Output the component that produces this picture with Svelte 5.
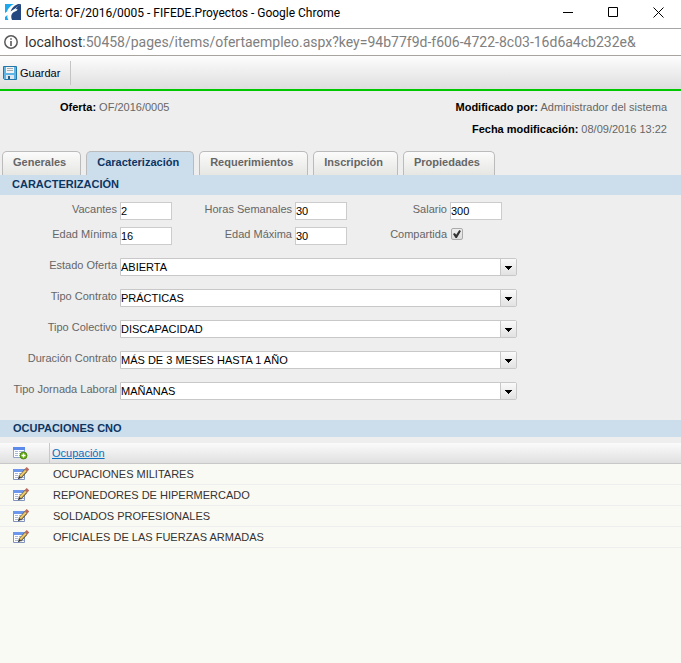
<script lang="ts">
	const url: string = '/pages/items/ofertaempleo.aspx?key=94b77f9d-f606-4722-8c03-16d6a4cb232e&';
	const tabs: string[] = ['Generales', 'Caracterización', 'Requerimientos', 'Inscripción', 'Propiedades'];
	const combos = [
		{ id: 'estado', label: 'Estado Oferta', value: 'ABIERTA' },
		{ id: 'contrato', label: 'Tipo Contrato', value: 'PRÁCTICAS' },
		{ id: 'colectivo', label: 'Tipo Colectivo', value: 'DISCAPACIDAD' },
		{ id: 'duracion', label: 'Duración Contrato', value: 'MÁS DE 3 MESES HASTA 1 AÑO' },
		{ id: 'jornada', label: 'Tipo Jornada Laboral', value: 'MAÑANAS' }
	];
	const ocupaciones: string[] = [
		'OCUPACIONES MILITARES',
		'REPONEDORES DE HIPERMERCADO',
		'SOLDADOS PROFESIONALES',
		'OFICIALES DE LAS FUERZAS ARMADAS'
	];

	let activeTab: string = 'Caracterización';
	let vacantes: string = '2';
	let horas: string = '30';
	let salario: string = '300';
	let edadMin: string = '16';
	let edadMax: string = '30';
	let compartida: boolean = true;
</script>

<div class="window">
	<header class="titlebar">
		<svg class="favicon" viewBox="0 0 16 16" width="16" height="16">
			<path fill="#1da7ee" d="M0 0h9C5 2 3 4.500 2 7.500L0 9z"/>
			<path fill="#1da7ee" d="M0 13l2.500-2C2 13 2.500 14.500 3.500 16H0z"/>
			<path fill="#24477f" d="M16 0v16H7C5.500 12 6.500 9.500 9 8l3-1.500L12.500 5l-2 .3C12 3 13.500 1.500 16 0z"/>
			<path fill="#24477f" d="M5.500 7.500C7 3.500 9.500 1.500 13 0h3l-5.500 4.300z"/>
		</svg>
		<span class="caption">Oferta: OF/2016/0005 - FIFEDE.Proyectos - Google Chrome</span>
		<button class="win-btn" aria-label="Minimizar">
			<svg viewBox="0 0 11 11" width="11" height="11"><path d="M0 5.500h10"/></svg>
		</button>
		<button class="win-btn" aria-label="Maximizar">
			<svg viewBox="0 0 11 11" width="11" height="11"><path d="M.5.5h9v9h-9z"/></svg>
		</button>
		<button class="win-btn" aria-label="Cerrar">
			<svg viewBox="0 0 11 11" width="11" height="11"><path d="M.5.5l10 10M10.500.5l-10 10"/></svg>
		</button>
	</header>

	<div class="address">
		<svg viewBox="0 0 14 14" width="14" height="14">
			<circle cx="7" cy="7" r="6.200" fill="none" stroke="#5a5a5a" stroke-width="1.500"/>
			<path fill="#5a5a5a" d="M6.200 3.200h1.600v1.600H6.200zM6.200 6h1.600v5H6.200z"/>
		</svg>
		<span class="url"><span class="host">localhost</span>:50458{url}</span>
	</div>

	<div class="toolbar">
		<button class="save">
			<svg viewBox="0 0 14 14" width="14" height="14">
				<path fill="#5fb4e6" stroke="#2376a8" d="M.5.5h13v13h-12l-1-1z"/>
				<path fill="#f4f4f4" d="M3 1h8v6H3z"/>
				<path stroke="#a3adb2" d="M4 2.500h6M4 4.500h6"/>
				<path fill="#dfe7ec" d="M3 9h8v4H3z"/>
				<path fill="#245f86" d="M5 10h2v3H5z"/>
			</svg>
			Guardar
		</button>
	</div>

	<section class="summary">
		<p><b>Oferta:</b> OF/2016/0005</p>
		<div class="modified">
			<p><b>Modificado por:</b> Administrador del sistema</p>
			<p><b>Fecha modificación:</b> 08/09/2016 13:22</p>
		</div>
	</section>

	<nav class="tabs">
		{#each tabs as tab}
			<button class="tab" class:active={tab === activeTab} on:click={() => (activeTab = tab)}>{tab}</button>
		{/each}
	</nav>

	<h2 class="band">CARACTERIZACIÓN</h2>

	<form class="form">
		<div class="fields">
			<label for="vacantes">Vacantes</label>
			<input id="vacantes" type="text" bind:value={vacantes} />
			<label for="horas">Horas Semanales</label>
			<input id="horas" type="text" bind:value={horas} />
			<label for="salario">Salario</label>
			<input id="salario" type="text" bind:value={salario} />
			<label for="edadMin">Edad Mínima</label>
			<input id="edadMin" type="text" bind:value={edadMin} />
			<label for="edadMax">Edad Máxima</label>
			<input id="edadMax" type="text" bind:value={edadMax} />
			<label for="compartida">Compartida</label>
			<input id="compartida" type="checkbox" bind:checked={compartida} />
		</div>

		<div class="combos">
			{#each combos as combo}
				<label for={combo.id}>{combo.label}</label>
				<div class="combo">
					<select id={combo.id}>
						<option>{combo.value}</option>
					</select>
					<span class="arrow">
						<svg viewBox="0 0 7 4" width="7" height="4" shape-rendering="crispEdges">
							<path d="M0 0h7v1H6v1H5v1H4v1H3V3H2V2H1V1H0z"/>
						</svg>
					</span>
				</div>
			{/each}
		</div>
	</form>

	<h2 class="band small">OCUPACIONES CNO</h2>

	<table class="grid">
		<thead>
			<tr>
				<th class="icon-col">
					<button class="icon-btn" aria-label="Añadir">
						<svg viewBox="0 0 16 14" width="16" height="14">
							<path fill="#fff" stroke="#8fa3cc" d="M.5 1.500h11v10H.5z"/>
							<path fill="#5b8aea" d="M0 1h12v3H0z"/>
							<path stroke="#a9b8d8" d="M2 5.500h3M6 5.500h5M2 7.500h3M6 7.500h5M2 9.500h3M6 9.500h5"/>
							<circle cx="10.500" cy="9.500" r="3.500" fill="#64ad12" stroke="#3d7d05" stroke-width=".8"/>
							<path stroke="#fff" stroke-width="1.400" d="M8.500 9.500h4M10.500 7.500v4"/>
						</svg>
					</button>
				</th>
				<th class="name-col"><a href="#ocupacion">Ocupación</a></th>
			</tr>
		</thead>
		<tbody>
			{#each ocupaciones as ocupacion}
				<tr>
					<td class="icon-col">
						<button class="icon-btn" aria-label="Editar">
							<svg viewBox="0 0 16 14" width="16" height="14">
								<path fill="#fff" stroke="#7f93bd" d="M.5 2.500h11v10H.5z"/>
								<path fill="#6c97ec" d="M0 2h12v3H0z"/>
								<path stroke="#a9b8d8" d="M2 6.500h3M6 6.500h3M2 8.500h3M2 10.500h3M7 10.500h4"/>
								<path stroke="#5c5030" stroke-width="3.600" d="M6.800 10.200L13 3.500"/>
								<path stroke="#ecca6a" stroke-width="2.200" d="M7.200 9.600L13 3.300"/>
								<path stroke="#b96a5c" stroke-width="3.600" d="M12.800 3.500L15 1.200"/>
								<path fill="#222" d="M5 12.200l.8-3 2 1.800z"/>
							</svg>
						</button>
					</td>
					<td class="name-col">{ocupacion}</td>
				</tr>
			{/each}
		</tbody>
	</table>
</div>

<style>
	:global(body) {
		margin: 0;
		background: #fafaf5;
	}

	.window {
		font-family: "Liberation Sans", Arial, sans-serif;
		font-size: 11px;
		line-height: 14px;
		color: #666;
		background: #eee;
	}

	button {
		font: inherit;
		border: none;
		background: none;
		padding: 0;
		margin: 0;
	}

	.titlebar {
		display: flex;
		align-items: center;
		height: 28px;
		padding-left: 5px;
		background: #fff;
		border-bottom: 1px solid #a5a5a5;
	}

	.caption {
		flex: 1;
		margin-left: 5px;
		padding-bottom: 2px;
		font-family: Roboto, "Open Sans", sans-serif;
		font-size: 12px;
		line-height: 16px;
		color: #000;
		white-space: nowrap;
	}

	.favicon {
		margin-bottom: 4px;
	}

	.win-btn {
		display: flex;
		justify-content: center;
		align-items: center;
		width: 45px;
		height: 24px;
		margin-bottom: 4px;
	}

	.win-btn svg {
		fill: none;
		stroke: #000;
	}

	.address {
		display: flex;
		align-items: center;
		gap: 7px;
		height: 26px;
		padding-left: 4px;
		background: #fff;
		border-bottom: 1px solid #a8a5a0;
		overflow: hidden;
	}

	.address svg {
		flex: none;
	}

	.url {
		font-family: Roboto, "Open Sans", sans-serif;
		font-size: 14px;
		line-height: 20px;
		color: #808080;
		white-space: nowrap;
	}

	.host {
		color: #333;
	}

	.toolbar {
		display: flex;
		align-items: flex-start;
		height: 28px;
		padding-top: 5px;
		background: linear-gradient(#fdfdfd, #dedede);
		border-bottom: 2px solid #00c800;
	}

	.save {
		display: flex;
		align-items: center;
		gap: 3px;
		height: 24px;
		padding: 0 10px 0 3px;
		border-right: 1px solid #c4c4c4;
		color: #002;
	}

	.summary {
		display: flex;
		justify-content: space-between;
		height: 44px;
		padding: 9px 14px 7px 60px;
	}

	.summary p {
		margin: 0 0 8px;
	}

	.summary b {
		color: #000;
	}

	.modified {
		text-align: right;
	}

	.tabs {
		display: flex;
		gap: 5px;
		padding-left: 2px;
	}

	.tab {
		height: 24px;
		padding: 0 14px 3px 10px;
		border: 1px solid #bbb;
		border-bottom: none;
		border-radius: 5px 5px 0 0;
		background: linear-gradient(#fbfbfb, #e6e6e3);
		font-weight: bold;
		color: #666;
	}

	.tab.active {
		background: #ccddec;
		color: #0c3562;
	}

	.band {
		height: 20px;
		margin: 0;
		padding-left: 12px;
		background: #ccddec;
		font-size: 11px;
		line-height: 19px;
		color: #0c3562;
	}

	.band.small {
		height: 17px;
		margin-bottom: 6px;
		padding-left: 13px;
		line-height: 17px;
	}

	.form {
		padding: 7px 0 20px;
	}

	.fields {
		display: grid;
		grid-template-columns: 117px 52px 117px 52px 97px 52px;
		gap: 7px 3px;
	}

	label {
		text-align: right;
		white-space: nowrap;
	}

	input[type="text"] {
		box-sizing: border-box;
		width: 100%;
		height: 18px;
		padding: 0;
		border: 1px solid #ccc;
		background: #fff;
		font: inherit;
		color: #000;
	}

	input[type="checkbox"] {
		appearance: none;
		display: grid;
		place-items: center;
		box-sizing: border-box;
		width: 12px;
		height: 12px;
		margin: 1px;
		border: 1px solid #aaa;
		border-radius: 2px;
		background: linear-gradient(#eee, #ddd);
	}

	input[type="checkbox"]:checked::before {
		content: "";
		width: 8px;
		height: 8px;
		background: #333;
		clip-path: polygon(0 50%, 22% 38%, 40% 60%, 78% 0, 100% 12%, 48% 100%, 32% 100%);
	}

	.combos {
		display: grid;
		grid-template-columns: 117px minmax(0, 397px);
		gap: 13px 3px;
		margin-top: 13px;
	}

	.combo {
		position: relative;
		height: 18px;
	}

	select {
		appearance: none;
		box-sizing: border-box;
		display: block;
		width: 100%;
		height: 18px;
		padding: 0 18px 1px 0;
		border: 1px solid #c8c8c8;
		border-radius: 0 2px 2px 0;
		background: #fff;
		font: inherit;
		color: #000;
	}

	/* drop-down button drawn over the right end of the select */
	.arrow {
		position: absolute;
		top: 1px;
		right: 1px;
		bottom: 1px;
		display: flex;
		justify-content: center;
		align-items: center;
		width: 16px;
		padding-top: 2px;
		box-sizing: border-box;
		border-left: 1px solid #c8c8c8;
		background: linear-gradient(#fafafa, #e2e2e2);
		pointer-events: none;
	}

	.grid {
		width: 100%;
		border-collapse: separate;
		border-spacing: 0;
		background: #fafaf5;
		color: #333;
	}

	.grid th,
	.grid td {
		height: 20px;
		padding: 0;
		text-align: left;
		font-weight: normal;
		border-bottom: 1px solid #eee;
	}

	.grid th {
		background: linear-gradient(#fbfbfb, #e0e0e0);
		border-bottom-color: #c8c8c8;
	}

	.grid .icon-col {
		width: 36px;
		padding-left: 13px;
	}

	.grid th.name-col {
		padding-left: 2px;
		border-left: 1px solid #c8c8c8;
	}

	.grid td.name-col {
		padding-left: 4px;
	}

	.icon-btn {
		display: block;
		padding-top: 2px;
	}

	a {
		color: #0b6fc2;
	}
</style>
